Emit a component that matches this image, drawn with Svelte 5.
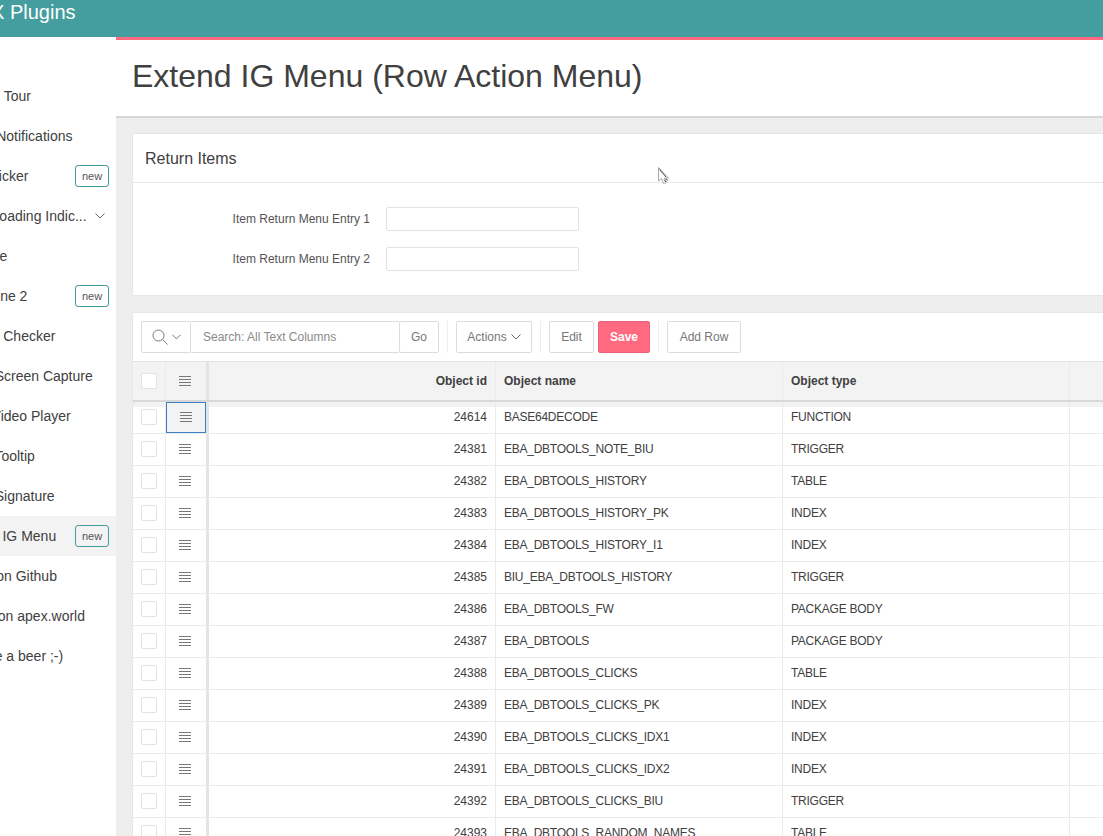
<script>
	const navItems = [
		{ label: 'Guided Tour' },
		{ label: 'Smart Notifications' },
		{ label: 'Time Picker', badge: true },
		{ label: 'Page Loading Indic...', chevron: true },
		{ label: 'Timeline' },
		{ label: 'Dropzone 2', badge: true },
		{ label: 'Upload Checker' },
		{ label: 'Client Screen Capture' },
		{ label: 'Page Video Player' },
		{ label: 'Client Tooltip' },
		{ label: 'Client Signature' },
		{ label: 'Extend IG Menu', badge: true, active: true },
		{ label: 'Demo on Github' },
		{ label: 'Plugin on apex.world' },
		{ label: 'Buy me a beer ;-)' }
	];

	const rows = [
		[24614, 'BASE64DECODE', 'FUNCTION'],
		[24381, 'EBA_DBTOOLS_NOTE_BIU', 'TRIGGER'],
		[24382, 'EBA_DBTOOLS_HISTORY', 'TABLE'],
		[24383, 'EBA_DBTOOLS_HISTORY_PK', 'INDEX'],
		[24384, 'EBA_DBTOOLS_HISTORY_I1', 'INDEX'],
		[24385, 'BIU_EBA_DBTOOLS_HISTORY', 'TRIGGER'],
		[24386, 'EBA_DBTOOLS_FW', 'PACKAGE BODY'],
		[24387, 'EBA_DBTOOLS', 'PACKAGE BODY'],
		[24388, 'EBA_DBTOOLS_CLICKS', 'TABLE'],
		[24389, 'EBA_DBTOOLS_CLICKS_PK', 'INDEX'],
		[24390, 'EBA_DBTOOLS_CLICKS_IDX1', 'INDEX'],
		[24391, 'EBA_DBTOOLS_CLICKS_IDX2', 'INDEX'],
		[24392, 'EBA_DBTOOLS_CLICKS_BIU', 'TRIGGER'],
		[24393, 'EBA_DBTOOLS_RANDOM_NAMES', 'TABLE']
	];
</script>

{#snippet burger()}
	<svg class="burger" width="12" height="10" viewBox="0 0 12 10">
		<path d="M0 .5h12M0 3.500h12M0 6.500h12M0 9.500h12" stroke="#777" fill="none" />
	</svg>
{/snippet}

{#snippet chevron(size)}
	<svg width={size} height="6" viewBox="0 0 10 6">
		<path d="M.5.5 5 5 9.500.5" stroke="#666" fill="none" />
	</svg>
{/snippet}

<div class="page">
	<header class="topbar"><span>APEX Plugins</span></header>

	<div class="columns">
		<nav class="sidebar">
			{#each navItems as item}
				<div class="nav-item" class:active={item.active}>
					<span class="nav-label">{item.label}</span>
					{#if item.badge}
						<span class="badge">new</span>
					{:else if item.chevron}
						<span class="nav-chevron">{@render chevron(10)}</span>
					{/if}
				</div>
			{/each}
		</nav>

		<main class="main">
			<div class="title-band">
				<h1>Extend IG Menu (Row Action Menu)</h1>
			</div>

			<div class="body">
				<section class="region">
					<h2 class="region-head">Return Items</h2>
					<div class="form">
						<div class="form-row">
							<label for="entry1">Item Return Menu Entry 1</label>
							<input id="entry1" type="text" />
						</div>
						<div class="form-row">
							<label for="entry2">Item Return Menu Entry 2</label>
							<input id="entry2" type="text" />
						</div>
					</div>
				</section>

				<section class="region grid-region">
					<div class="toolbar">
						<div class="search">
							<button class="tb-btn search-btn" aria-label="Search columns">
								<svg width="16" height="16" viewBox="0 0 16 16">
									<circle cx="6.500" cy="6.500" r="5.500" stroke="#777" fill="none" />
									<path d="M10.500 10.500 15.500 15.500" stroke="#777" fill="none" />
								</svg>
								{@render chevron(9)}
							</button>
							<div class="search-input">Search: All Text Columns</div>
							<button class="tb-btn go">Go</button>
						</div>
						<span class="sep"></span>
						<button class="tb-btn actions">Actions {@render chevron(10)}</button>
						<span class="sep"></span>
						<button class="tb-btn edit">Edit</button>
						<button class="tb-btn save">Save</button>
						<span class="sep"></span>
						<button class="tb-btn add">Add Row</button>
					</div>

					<div class="row head">
						<div class="cell c-check"><span class="check"></span></div>
						<div class="cell c-menu">{@render burger()}</div>
						<div class="cell c-id">Object id</div>
						<div class="cell c-text">Object name</div>
						<div class="cell c-text">Object type</div>
					</div>

					{#each rows as [id, name, type], i}
						<div class="row body-row" class:first={i === 0}>
							<div class="cell c-check"><span class="check"></span></div>
							<div class="cell c-menu" class:focused={i === 0}>{@render burger()}</div>
							<div class="cell c-id">{id}</div>
							<div class="cell c-text narrow">{name}</div>
							<div class="cell c-text narrow">{type}</div>
						</div>
					{/each}
				</section>
			</div>
		</main>
	</div>

	<svg class="cursor" width="12" height="18" viewBox="0 0 12 18">
		<path d="M.5.5v13.500l3-2.500 2 5 3-1-2-4.500h4z" fill="#fff" stroke="#aaa" />
		<path d="M1.500 2.500 8 10M6 12.500l2 2.500M8 11.500l1.500 2" stroke="#444" fill="none" />
	</svg>
</div>

<style>
	:global(body) {
		margin: 0;
		background: #eee;
	}

	.page {
		position: relative;
		height: 836px;
		overflow: hidden;
		font-family: 'Liberation Sans', Arial, sans-serif;
		color: #404040;
	}

	.topbar {
		height: 37px;
		background: #449d9e;
		color: #fff;
		font-size: 20px;
		line-height: 24px;
		overflow: hidden;
	}

	.topbar span {
		display: block;
		margin-left: -49px;
		white-space: nowrap;
	}

	.columns {
		display: flex;
		height: 799px;
	}

	.sidebar {
		flex: 0 0 116px;
		box-sizing: border-box;
		padding-top: 39px;
		background: #fff;
		overflow: hidden;
	}

	.nav-item {
		display: flex;
		align-items: center;
		height: 40px;
		font-size: 14px;
		white-space: nowrap;
	}

	.nav-item.active {
		background: #f3f3f3;
	}

	.nav-label {
		flex: 1;
		margin-left: -45px;
	}

	.badge {
		box-sizing: border-box;
		width: 34px;
		height: 22px;
		margin-right: 7px;
		border: 1px solid #449d9e;
		border-radius: 3px;
		font-size: 11px;
		line-height: 20px;
		text-align: center;
		color: #555;
		background: #fff;
	}

	.active .badge {
		background: #f3f3f3;
	}

	.nav-chevron {
		display: flex;
		margin-right: 11px;
	}

	.main {
		flex: 1;
		min-width: 0;
		background: #eee;
	}

	.title-band {
		box-sizing: border-box;
		height: 81px;
		padding-left: 16px;
		background: #fff;
		border-top: 3px solid #ff6a80;
		border-bottom: 2px solid #d6d6d6;
	}

	h1 {
		margin: 0;
		font-size: 32px;
		font-weight: 400;
		line-height: 73px;
		white-space: nowrap;
	}

	.body {
		padding: 15px 0 0 16px;
		width: 1100px;
	}

	.region {
		background: #fff;
		border: 1px solid #e6e6e6;
		border-right: 0;
	}

	.region-head {
		box-sizing: border-box;
		height: 49px;
		margin: 0;
		padding-left: 12px;
		font-size: 16px;
		font-weight: 400;
		line-height: 49px;
		border-bottom: 1px solid #e8e8e8;
	}

	.form {
		display: flex;
		flex-direction: column;
		gap: 16px;
		padding: 24px 0;
	}

	.form-row {
		display: flex;
		align-items: center;
		gap: 16px;
	}

	label {
		width: 237px;
		font-size: 12px;
		text-align: right;
		color: #555;
	}

	input {
		box-sizing: border-box;
		width: 193px;
		height: 24px;
		margin: 0;
		padding: 0 6px;
		border: 1px solid #e2e2e2;
		border-radius: 2px;
		background: #fff;
	}

	.grid-region {
		margin-top: 16px;
	}

	.toolbar {
		display: flex;
		align-items: center;
		height: 48px;
		padding-left: 8px;
		box-sizing: border-box;
	}

	.search {
		display: flex;
	}

	.tb-btn {
		box-sizing: border-box;
		display: flex;
		align-items: center;
		justify-content: center;
		gap: 4px;
		height: 32px;
		padding: 0;
		border: 1px solid #dcdcdc;
		border-radius: 2px;
		background: #fff;
		font: 12px 'Liberation Sans', Arial, sans-serif;
		color: #777;
	}

	.search-btn {
		width: 50px;
	}

	.search-input {
		box-sizing: border-box;
		width: 208px;
		height: 32px;
		padding-left: 12px;
		border-top: 1px solid #dcdcdc;
		border-bottom: 1px solid #dcdcdc;
		font-size: 12px;
		line-height: 30px;
		color: #8a8a8a;
	}

	.go {
		width: 40px;
	}

	.sep {
		width: 1px;
		height: 32px;
		margin: 0 8px;
		background: #eeeeee;
	}

	.actions {
		width: 76px;
	}

	.edit {
		width: 45px;
	}

	.save {
		width: 52px;
		margin-left: 4px;
		background: #ff6a80;
		border-color: #f06078;
		color: #fff;
		font-weight: 700;
	}

	.add {
		width: 74px;
	}

	.row {
		display: flex;
		height: 32px;
		font-size: 12px;
		border-bottom: 1px solid #ebebeb;
		box-sizing: border-box;
		position: relative;
	}

	.body-row .cell {
		padding-bottom: 2px;
	}

	.row.first::before {
		content: '';
		position: absolute;
		left: 0;
		right: 0;
		top: 0;
		height: 5px;
		background: #f2f2f2;
	}

	.row.head {
		height: 41px;
		background: #f3f3f3;
		border-top: 1px solid #e3e3e3;
		border-bottom: 2px solid #d8d8d8;
		font-weight: 700;
	}

	.cell {
		position: relative;
		box-sizing: border-box;
		display: flex;
		align-items: center;
		border-right: 1px solid #ebebeb;
	}

	.c-check {
		width: 33px;
		padding-left: 8px;
	}

	.c-menu {
		width: 43px;
		justify-content: center;
		padding-right: 3px;
		border-right: 3px solid #e4e4e4;
	}

	.focused::after {
		content: '';
		position: absolute;
		left: 0;
		top: 0;
		right: 0;
		bottom: 0;
		border: 1px solid #3b7fc4;
	}

	.c-menu.focused {
		background: #f3f3f3;
		justify-content: flex-start;
		padding-left: 14px;
	}

	.c-id {
		width: 287px;
		justify-content: flex-end;
		padding-right: 8px;
	}

	.c-text {
		width: 287px;
		padding-left: 8px;
	}

	.narrow {
		letter-spacing: -0.25px;
	}

	.check {
		box-sizing: border-box;
		width: 16px;
		height: 16px;
		border: 1px solid #e2e2e2;
		border-radius: 2px;
		background: #fff;
	}

	.burger {
		display: block;
	}

	.cursor {
		position: absolute;
		left: 658px;
		top: 167px;
	}
</style>
